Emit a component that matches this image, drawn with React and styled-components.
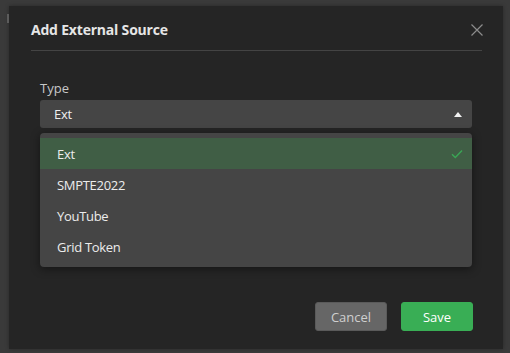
import React from 'react';
import styled, { createGlobalStyle } from 'styled-components';

const Global = createGlobalStyle`
  html, body {
    margin: 0;
    padding: 0;
    background: #3a3a3a;
    font-family: "Open Sans", "Noto Sans", sans-serif;
  }
`;

const Backdrop = styled.div`
  position: relative;
  width: 510px;
  height: 353px;
  padding: 6px 7px 4px 9px;
  box-sizing: border-box;
  display: flex;
`;

const PageMark = styled.div`
  position: absolute;
  left: 7px;
  top: 14px;
  width: 2px;
  height: 9px;
  background: #5c5c5c;
`;

const Modal = styled.div`
  flex: 1;
  background: #252525;
  display: flex;
  flex-direction: column;
  box-shadow: 0 0 4px rgba(0, 0, 0, 0.3);
`;

const Header = styled.div`
  margin: 0 21px 0 22px;
  padding: 14px 0 10px;
  border-bottom: 1px solid #444;
  display: flex;
  align-items: center;
  justify-content: space-between;
`;

const Title = styled.h2`
  margin: 0;
  font-size: 14px;
  line-height: 20px;
  font-weight: 700;
  letter-spacing: -0.2px;
  color: #e6e6e6;
`;

const Close = styled.button`
  border: 0;
  background: none;
  padding: 0;
  width: 12px;
  height: 12px;
  margin-right: -1px;
  display: flex;
  cursor: pointer;
`;

const Body = styled.div`
  flex: 1;
  padding: 28px 31px 0;
  display: flex;
  flex-direction: column;
`;

const Label = styled.label`
  font-size: 13px;
  line-height: 18px;
  color: #c8c8c8;
  margin-bottom: 3px;
`;

const Field = styled.div`
  position: relative;
  width: 432px;
`;

const SelectBox = styled.div`
  height: 28px;
  background: #454545;
  border-radius: 3px;
  padding: 0 10px 0 14px;
  display: flex;
  align-items: center;
  justify-content: space-between;
  font-size: 13px;
  letter-spacing: -0.3px;
  color: #f0f0f0;
`;

const Caret = styled.span`
  width: 0;
  height: 0;
  border-left: 4.5px solid transparent;
  border-right: 4.5px solid transparent;
  border-bottom: 5px solid #f2f2f2;
`;

const Menu = styled.ul`
  position: absolute;
  top: 33px;
  left: 0;
  right: 0;
  margin: 0;
  padding: 5px 0 5px;
  list-style: none;
  background: #454545;
  border-radius: 4px;
  box-shadow: 0 2px 10px rgba(0, 0, 0, 0.45);
`;

const Option = styled.li`
  height: 31px;
  padding: 0 9px 0 17px;
  display: flex;
  align-items: center;
  justify-content: space-between;
  font-size: 13px;
  letter-spacing: -0.3px;
  color: #ececec;
  background: ${p => (p.$selected ? '#405e45' : 'transparent')};
`;

const Footer = styled.div`
  display: flex;
  justify-content: flex-end;
  gap: 14px;
  padding: 0 30px 18px;
`;

const Button = styled.button`
  width: 72px;
  height: 29px;
  border-radius: 3px;
  font-family: inherit;
  font-size: 13px;
  border: 1px solid ${p => (p.$primary ? '#39ae55' : '#5a5a5a')};
  background: ${p => (p.$primary ? '#39ae55' : '#666666')};
  color: ${p => (p.$primary ? '#ffffff' : '#cfcfcf')};
`;

const options = ['Ext', 'SMPTE2022', 'YouTube', 'Grid Token'];

export default function App() {
  const selected = 'Ext';
  return (
    <>
      <Global />
      <Backdrop>
        <PageMark />
        <Modal>
          <Header>
            <Title>Add External Source</Title>
            <Close aria-label="Close">
              <svg width="12" height="12" viewBox="0 0 12 12">
                <path d="M0.5 0.5 L11.5 11.5 M11.5 0.5 L0.5 11.5" stroke="#8c8c8c" strokeWidth="1.2" />
              </svg>
            </Close>
          </Header>
          <Body>
            <Label>Type</Label>
            <Field>
              <SelectBox>
                <span>{selected}</span>
                <Caret />
              </SelectBox>
              <Menu>
                {options.map(o => (
                  <Option key={o} $selected={o === selected}>
                    <span>{o}</span>
                    {o === selected && (
                      <svg width="12" height="10" viewBox="0 0 12 10">
                        <path d="M1 5.2 L4.3 8.5 L11 1.5" fill="none" stroke="#3aa655" strokeWidth="1.4" />
                      </svg>
                    )}
                  </Option>
                ))}
              </Menu>
            </Field>
          </Body>
          <Footer>
            <Button>Cancel</Button>
            <Button $primary>Save</Button>
          </Footer>
        </Modal>
      </Backdrop>
    </>
  );
}
